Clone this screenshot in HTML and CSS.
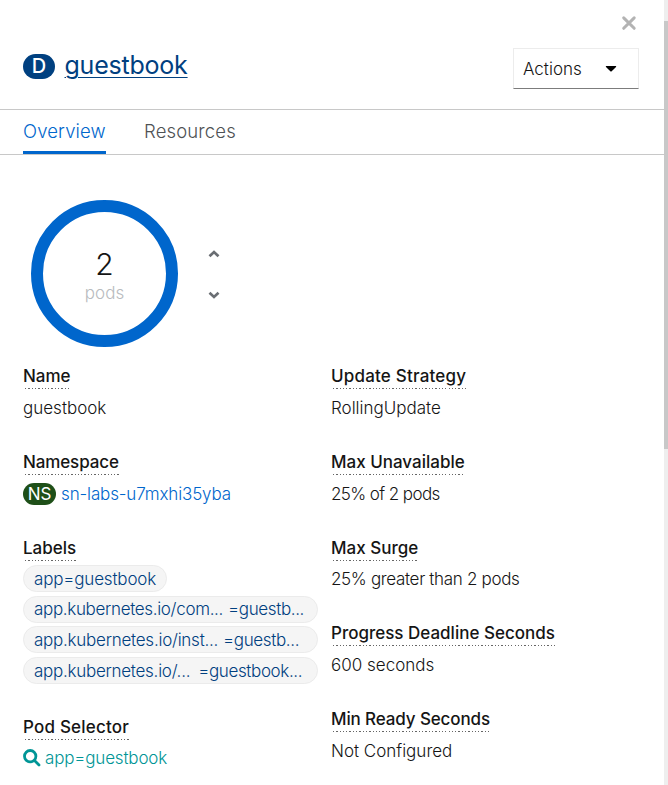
FILE: index.html
```html
<!DOCTYPE html>
<html lang="en">
<head>
<meta charset="utf-8">
<title>guestbook</title>
<link rel="stylesheet" href="styles.css">
</head>
<body>
<div class="panel">
  <header class="header">
    <div class="close-row">
      <button class="close" aria-label="Close"><svg width="16" height="16" viewBox="0 0 16 16"><path d="M2.700 2.900 13.200 13.300M13.200 2.900 2.700 13.300"/></svg></button>
    </div>
    <div class="title-row">
      <h1 class="title"><span class="badge badge-d">D</span><a class="title-link">guestbook</a></h1>
      <button class="actions"><span>Actions</span><svg width="12" height="8" viewBox="0 0 12 8"><path d="M1.200 1h9.600q.8.200.2.900L6.700 6.300q-.7.600-1.400 0L1 1.900Q.4 1.200 1.200 1Z"/></svg></button>
    </div>
  </header>
  <nav class="tabs"><a class="tab active">Overview</a><a class="tab">Resources</a></nav>
  <main class="content">
    <section class="pods">
      <div class="ring"><span class="count">2</span><span class="unit">pods</span></div>
      <div class="scale">
        <svg width="12" height="8" viewBox="0 0 12 8"><path d="M1.500 6.300 6 2.100l4.500 4.200"/></svg>
        <svg width="12" height="8" viewBox="0 0 12 8"><path d="M1.500 1.700 6 5.900l4.500-4.200"/></svg>
      </div>
    </section>
    <div class="details">
      <dl class="column">
        <div class="field"><dt><span class="term">Name</span></dt><dd>guestbook</dd></div>
        <div class="field"><dt><span class="term snug">Namespace</span></dt><dd class="resource"><span class="badge badge-ns">NS</span><a class="link">sn-labs-u7mxhi35yba</a></dd></div>
        <div class="field labels"><dt><span class="term">Labels</span></dt>
          <dd class="chips">
            <span class="chip"><span class="query">app=guestbook</span></span>
            <span class="chip wide"><span class="key-component">app.kubernetes.io/com...</span><span class="value">=guestb...</span></span>
            <span class="chip wide"><span class="key-instance">app.kubernetes.io/inst...</span><span class="value">=guestb...</span></span>
            <span class="chip wide last"><span class="key-name">app.kubernetes.io/...</span><span class="value">=guestbook...</span></span>
          </dd></div>
        <div class="field"><dt><span class="term loose">Pod Selector</span></dt><dd class="selector"><svg width="18" height="18" viewBox="0 0 18 18"><circle cx="7.200" cy="7.200" r="5.700"/><path d="m11.500 11.500 4.500 4.500"/></svg><a class="query">app=guestbook</a></dd></div>
      </dl>
      <dl class="column">
        <div class="field"><dt><span class="term loose">Update Strategy</span></dt><dd>RollingUpdate</dd></div>
        <div class="field"><dt><span class="term">Max Unavailable</span></dt><dd class="unavailable">25% of 2 pods</dd></div>
        <div class="field"><dt><span class="term">Max Surge</span></dt><dd class="surge">25% greater than 2 pods</dd></div>
        <div class="field"><dt><span class="term">Progress Deadline Seconds</span></dt><dd>600 seconds</dd></div>
        <div class="field"><dt><span class="term snug">Min Ready Seconds</span></dt><dd>Not Configured</dd></div>
      </dl>
    </div>
  </main>
</div>
<div class="scrollbar"><div class="thumb"></div></div>
</body>
</html>
```
FILE: styles.css
```css
* { box-sizing: border-box; }
body { margin: 0; height: 785px; overflow: hidden; display: flex; background: #fff; color: #151515; font: 300 17px/26px Inter, "Open Sans", sans-serif; }
h1, dl, dd { margin: 0; }
button { padding: 0; background: none; border: 0; font: inherit; color: inherit; }
svg { display: block; flex: none; }
.panel { width: 664px; }
.header { height: 110px; border-bottom: 1px solid #c8c8c8; padding: 15px 25px 0 23px; }
.close-row { display: flex; justify-content: flex-end; height: 33px; padding-right: 2px; }
.close svg { fill: none; stroke: #b3b3b3; stroke-width: 3; stroke-linecap: round; }
.close { height: 16px; }
.title-row { display: flex; justify-content: space-between; }
.title { display: flex; align-items: center; height: 36px; font-size: 25px; font-weight: 400; color: #004080; gap: 9.500px; }
.title-link { letter-spacing: -.22px; line-height: 26px; margin-top: -2px; text-decoration: underline; text-decoration-thickness: 1px; text-underline-offset: 3px; }
.badge { display: flex; align-items: center; justify-content: center; color: #fff; border-radius: 13px; }
.badge-d { width: 32px; height: 25px; background: #004080; font-size: 20px; font-weight: 500; }
.badge-ns { width: 33px; height: 22px; background: #1e4f18; font-size: 17px; font-weight: 400; }
.actions { display: flex; align-items: center; justify-content: space-between; width: 126px; height: 41px; padding: 0 21px 0 9px; border: 1px solid #ececec; border-bottom-color: #7c7c7c; }
.tabs { display: flex; height: 45px; border-bottom: 1px solid #c8c8c8; padding-left: 23px; gap: 38px; font-size: 18.500px; letter-spacing: .14px; color: #4f5255; }
.tab { height: 44px; line-height: 43px; }
.active { color: #06c; border-bottom: 3px solid #06c; width: 83px; }
.content { padding: 45px 0 0 23px; }
.pods { display: flex; height: 165.240px; padding-left: 8px; }
.ring { width: 147px; height: 147px; border: 12.500px solid #06c; border-radius: 50%; display: flex; flex-direction: column; align-items: center; padding-top: 36px; }
.count { font-size: 30px; line-height: 33px; }
.unit { color: #b8bbbe; line-height: 24px; }
.scale { padding: 50px 0 0 30px; display: grid; align-content: start; gap: 33px; }
.scale svg { fill: none; stroke: #6a6e73; stroke-width: 2.700; }
.details { display: grid; grid-template-columns: 295px 310px; gap: 13px; }
.column { display: flex; flex-direction: column; }
.field { height: 56px; margin-bottom: 29.660px; white-space: nowrap; }
dt { height: 24px; font-weight: 500; line-height: 22px; margin-bottom: 5.650px; }
.term { display: inline-block; height: 24px; background: repeating-linear-gradient(90deg, transparent 0 2px, #666 2px 3.300px) 0 23px / 100% 1px no-repeat; }
.snug { letter-spacing: -.12px; }
.loose { letter-spacing: .2px; }
.resource, .selector { display: flex; align-items: center; height: 26px; gap: 5px; }
.link { color: #06c; letter-spacing: -.14px; }
.labels { height: 148px; margin-bottom: 31.200px; }
.labels dt { margin-bottom: 4.700px; }
.labels + .field dt { margin-bottom: 5px; }
.chips { display: grid; gap: 3.600px; justify-items: start; color: #004080; }
.chip { display: flex; align-items: center; height: 27px; width: 144px; padding: 0 10px; border: 1px solid #ebebeb; border-radius: 14px; background: #f5f5f5; gap: 5px; }
.wide { width: 295px; }
.last { gap: 8px; }
.query { letter-spacing: -.17px; }
.key-component { letter-spacing: -.33px; }
.key-instance { letter-spacing: -.25px; }
.key-name { letter-spacing: -.27px; }
.value { letter-spacing: -.37px; }
.unavailable { letter-spacing: -.6px; }
.surge { letter-spacing: -.33px; }
.selector { color: #009596; gap: 4px; }
.selector svg { fill: none; stroke: #009596; stroke-width: 2.800; stroke-linecap: round; }
.scrollbar { width: 4px; height: 785px; background: #eee; padding-top: 21px; }
.thumb { height: 428px; background: #c8c8c8; }
```
